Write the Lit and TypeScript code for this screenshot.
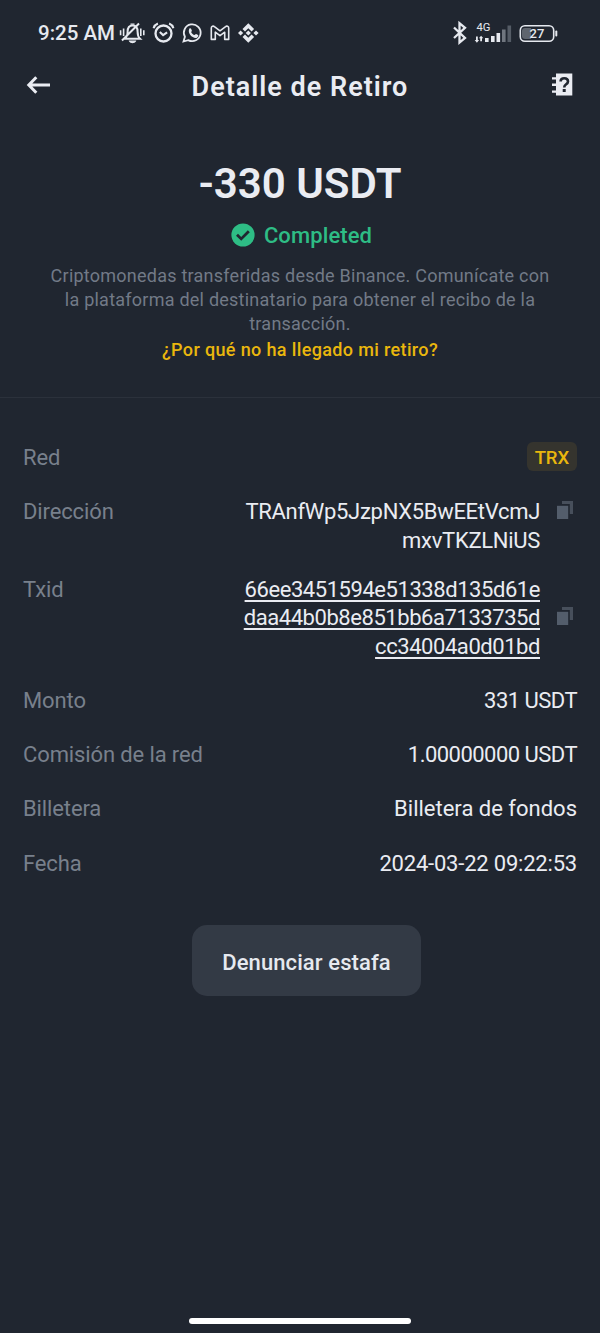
import { LitElement, html, css, svg } from "lit";
import { customElement } from "lit/decorators.js";

const copyIcon = html`<svg class="copy" viewBox="0 0 18 20" width="18" height="20">
  <path d="M6 1h11v13h-3.2V4H6z" fill="#474f5b" />
  <path d="M1 5.8h11.2V19H1z" fill="#535d6b" />
</svg>`;

const bars = [
  [10, 23, 4, "#e6e9ef"],
  [16, 21, 6, "#e6e9ef"],
  [21.5, 18, 9, "#e6e9ef"],
  [27, 14.5, 12.5, "#70767f"],
  [32.5, 10.5, 16.5, "#555c66"],
];

@customElement("status-bar")
export class StatusBar extends LitElement {
  static styles = css`
    :host { display: flex; height: 66px; box-sizing: border-box; padding: 19px 41px 19px 38px; align-items: center; color: #e6e9ef; }
    .time { font: 500 20.5px/28px Roboto, sans-serif; letter-spacing: 0; width: 81px; white-space: nowrap; }
    svg { display: block; flex: none; }
    .spacer { flex: 1; }
  `;
  render() {
    return html`
      <span class="time">9:25 AM</span>
      <svg width="142" height="28" viewBox="0 0 142 28" fill="none" stroke="#e6e9ef" stroke-width="2">
        <path d="M5.5 19.8c2.6-1.7 3.1-3.8 3.1-7 0-3.6 1.6-6.2 5-6.2s5 2.6 5 6.2c0 3.2.4 5.2 2.4 7zM3 21.5 20 4.5" />
        <path d="M10.5 22.2h6c-.5 1.8-5.5 1.8-6 0zM11.5 5.2h4" fill="#e6e9ef" stroke-width="1.2" />
        <path d="M1.6 11.2v5M4.6 9.5v7.5M21.8 9.5v7.5M24.8 11.2v5" stroke-width="1.6" />
        <circle cx="44.5" cy="14.5" r="8" stroke-width="2.3" />
        <path d="m40.8 13 3.3 3.1 4-2.8M34.6 9.2c.7-2.2 2.2-3.8 4.3-4.6M54.4 9.2c-.7-2.2-2.2-3.8-4.3-4.6" stroke-width="2.1" />
        <path d="m64.5 22.5 1.4-4.7a8.4 8.4 0 1 1 3.3 3.3z" stroke-width="1.8" />
        <path d="M70.3 9.8c.6-.8 1.6-.6 1.9.2l.7 1.7c0 .6-.9 1.1-.7 1.5.8 1.5 1.9 2.3 3.3 2.9.5.1 1-1.2 1.6-1l2 1c.7.5-.3 2.5-1.6 2.8-3.9.8-9.4-4.5-7.2-9.1z" fill="#e6e9ef" stroke="none" />
        <path d="M92.3 20.4V9c0-1.8 2-2.3 3.1-1.4l5.6 4.2 5.6-4.2c1.1-.9 3.1-.4 3.1 1.4v11.4h-4v-7.2L101 16.7l-4.7-3.5v7.2z" stroke-width="1.6" stroke-linejoin="round" />
        <path d="m129.3 4.3 5.8 5.8-2.5 2.5-3.3-3.3-3.3 3.3-2.5-2.5zM129.3 23.7l5.8-5.8-2.5-2.5-3.3 3.3-3.3-3.3-2.5 2.5zM129.3 11.4l2.6 2.6-2.6 2.6-2.6-2.6zM121.6 11.4l2.6 2.6-2.6 2.6-2.6-2.6zM137 11.4l2.6 2.6-2.6 2.6-2.6-2.6z" fill="#e6e9ef" stroke="none" />
      </svg>
      <span class="spacer"></span>
      <svg width="108" height="28" viewBox="0 0 108 28" font-family="Roboto, sans-serif" fill="#e6e9ef">
        <path d="m3 8.5 11 10.5-5.5 4.6V4.2L14 8.8 3 19" fill="none" stroke="#e6e9ef" stroke-width="2.3" />
        <text x="25.5" y="12.2" font-size="11" textLength="14" lengthAdjust="spacingAndGlyphs">4G</text>
        <path d="M25 17.5h1.8v3.5h1.3l-2.2 2.7-2.2-2.7H25zM29.2 22.2h1.8v-3h1.3l-2.2-2.5-2.2 2.5h1.3z" />
        ${bars.map(([x, y, h, c]) => svg`<rect x=${24 + (x as number)} y=${(y as number) - 4} width="3.6" height=${h} fill=${c} />`)}
        <rect x="69.3" y="6.7" width="33.4" height="15.6" rx="4.6" fill="none" stroke="#e6e9ef" stroke-width="1.6" />
        <path d="M74 9h6v11h-6a3 3 0 0 1-3-3v-5a3 3 0 0 1 3-3z" fill="#5f656e" />
        <rect x="104.3" y="11.5" width="2" height="6" rx="1" />
        <text x="78.5" y="19.2" font-size="13" font-weight="500" textLength="15">27</text>
      </svg>
    `;
  }
}

@customElement("app-root")
export class AppRoot extends LitElement {
  static styles = css`
    :host { display: flex; flex-direction: column; width: 600px; height: 1333px; overflow: hidden; background: #202630; color: #eaecf2; font-family: Roboto, "Noto Sans", sans-serif; }
    svg { display: block; flex: none; }
    header { display: grid; grid-template-columns: 60px 1fr 60px; height: 40px; align-items: center; }
    .back { margin: 0 0 2px 26px; }
    .book { margin: 0 0 3px 11px; }
    h1 { margin: 2px 0 0; font-size: 27px; line-height: 36px; font-weight: 600; letter-spacing: 1px; text-align: center; white-space: nowrap; }
    .hero { display: flex; flex-direction: column; align-items: center; height: 292px; box-sizing: border-box; padding-top: 54px; border-bottom: 1px solid #2b313b; }
    .amount { font-size: 42px; line-height: 48px; font-weight: 600; letter-spacing: 0; }
    .status { display: flex; align-items: center; gap: 9px; margin: 13px 0 0 3px; height: 28px; color: #2ebd85; font-size: 22px; font-weight: 500; letter-spacing: 0.1px; }
    .note { margin-top: 15px; color: #727a87; font-size: 18px; line-height: 24px; letter-spacing: 0.24px; text-align: center; white-space: nowrap; }
    .why { margin-top: 2px; color: #eab70d; font-size: 18px; line-height: 24px; font-weight: 500; letter-spacing: 0.36px; }
    .details { display: flex; flex-direction: column; gap: 25.8px; padding: 46px 23px 0; font-size: 22px; line-height: 28.5px; }
    .row { display: flex; justify-content: space-between; }
    .tight { margin-bottom: -5.5px; }
    .label { color: #78808c; letter-spacing: -0.12px; }
    .end { display: flex; gap: 16px; align-items: center; text-align: right; letter-spacing: -0.3px; }
    .top { align-items: flex-start; }
    .copy { margin: 0 3px 4px 0; }
    .top .copy { margin: 2px 3px 0 0; }
    .link { letter-spacing: -0.44px; text-decoration: underline; text-decoration-thickness: 1.5px; text-underline-offset: 3px; text-decoration-skip-ink: none; }
    .tag { height: 29px; line-height: 32px; margin: -2px 0 1px; padding: 0 8px; border-radius: 6px; background: #35342e; color: #eab70d; font-size: 18.5px; font-weight: 500; letter-spacing: -0.1px; }
    .report { align-self: center; flex: none; margin: 47px 0 0 13px; width: 229px; height: 71px; padding: 5px 0 0; border: 0; border-radius: 15px; background: #333a45; color: #e6e9ef; font: 500 22px/28px Roboto, sans-serif; letter-spacing: 0.1px; }
    .home { align-self: center; margin: auto 0 9.5px; width: 222px; height: 5.5px; border-radius: 3px; background: #fff; }
    .ls-b { letter-spacing: -0.2px; }
    .ls-c { letter-spacing: -0.53px; }
  `;
  render() {
    return html`
      <status-bar></status-bar>
      <header>
        <svg class="back" width="25" height="20" viewBox="0 0 25 20"><path d="M10.3 2.2 2.8 10l7.5 7.8M3 10h21" fill="none" stroke="#eaecf2" stroke-width="3" /></svg>
        <h1>Detalle de Retiro</h1>
        <svg class="book" width="22" height="23" viewBox="0 0 22 23">
          <path d="M5 .5h16.3v22H5v-2.8H1v-2.3h4v-4.3H1v-2.6h4V6.5H1V4.2h4z" fill="#eaecf2" />
          <path d="M9.6 8.6c0-2.2 1.4-3.4 3.6-3.4s3.8 1.2 3.8 3.2c0 3-3.8 2.7-3.8 6" fill="none" stroke="#202630" stroke-width="2.6" /><path d="M11.7 16h3v3h-3z" fill="#202630" />
        </svg>
      </header>
      <section class="hero">
        <div class="amount">-330 USDT</div>
        <div class="status">
          <svg width="24" height="24" viewBox="0 0 24 24"><circle cx="12" cy="12" r="11.6" fill="#2ebd85" /><path d="m6 11.8 4.2 4.1 7.6-7.6" fill="none" stroke="#202630" stroke-width="2.8" /></svg>
          <span>Completed</span>
        </div>
        <div class="note">Criptomonedas transferidas desde Binance. Comunícate con<br />la plataforma del destinatario para obtener el recibo de la<br />transacción.</div>
        <div class="why">¿Por qué no ha llegado mi retiro?</div>
      </section>
      <section class="details">
        <div class="row"><span class="label">Red</span><span class="tag">TRX</span></div>
        <div class="row tight"><span class="label">Dirección</span><div class="end top"><span>TRAnfWp5JzpNX5BwEEtVcmJ<br />mxvTKZLNiUS</span>${copyIcon}</div></div>
        <div class="row"><span class="label">Txid</span><div class="end"><span class="link">66ee3451594e51338d135d61e<br />daa44b0b8e851bb6a7133735d<br />cc34004a0d01bd</span>${copyIcon}</div></div>
        <div class="row"><span class="label">Monto</span><span class="ls-c">331 USDT</span></div>
        <div class="row"><span class="label">Comisión de la red</span><span class="ls-c">1.00000000 USDT</span></div>
        <div class="row"><span class="label">Billetera</span><span>Billetera de fondos</span></div>
        <div class="row"><span class="label">Fecha</span><span class="ls-b">2024-03-22 09:22:53</span></div>
      </section>
      <button class="report">Denunciar estafa</button>
      <div class="home"></div>
    `;
  }
}
